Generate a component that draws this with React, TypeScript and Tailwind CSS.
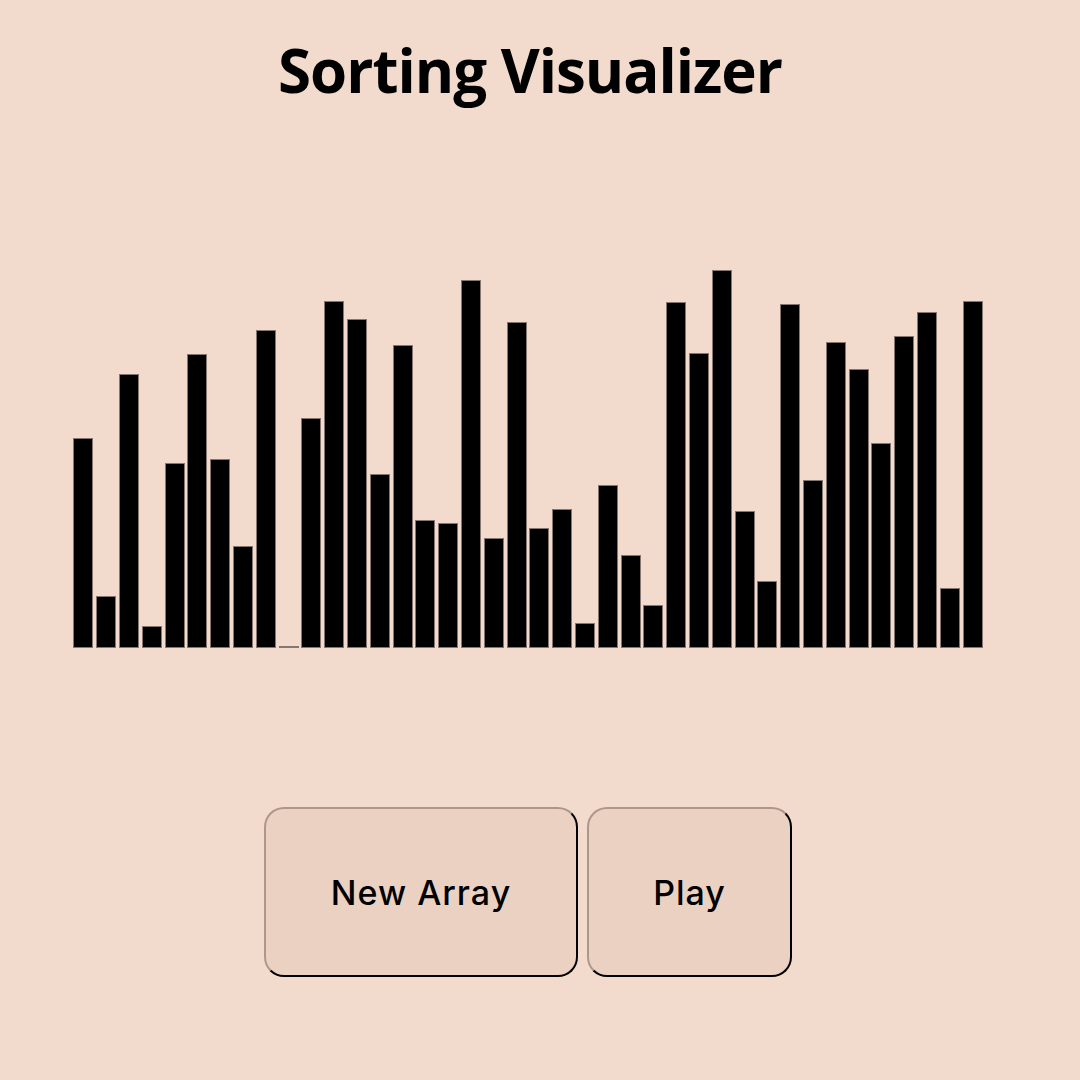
import React from "react";

const HEIGHTS = [
  210, 52, 274, 22, 185, 294, 189, 102, 318, 2,
  230, 347, 329, 174, 303, 128, 125, 368, 110, 326,
  120, 139, 25, 163, 93, 43, 346, 295, 378, 137,
  67, 344, 168, 306, 279, 205, 312, 336, 60, 347,
];

export default function App() {
  return (
    <div className="min-h-[1080px] w-full bg-[#f2dbcd] pr-[24px]">
      <div className="flex w-full flex-col items-center">
        <h1
          className="mt-[40px] pl-[4px] text-[60px] font-bold leading-[60px] tracking-[-1px] text-black"
          style={{ fontFamily: '"Open Sans", "Noto Sans", sans-serif' }}
        >
          Sorting Visualizer
        </h1>

        <div className="mt-[148px] flex h-[400px] items-end gap-[2.81px]">
          {HEIGHTS.map((h, i) => (
            <div
              key={i}
              className="w-[20px] border border-[#85776f] bg-black"
              style={{ height: `${h}px` }}
            />
          ))}
        </div>

        <div
          className="mt-[159px] flex gap-[9px]"
          style={{ fontFamily: 'Inter, "Liberation Sans", sans-serif' }}
        >
          <button className="flex h-[170px] w-[314px] items-center justify-center rounded-[20px] border-2 border-t-[#ad978a] border-l-[#ad978a] border-r-black border-b-black bg-[#ebd1c1] text-[34px] font-medium tracking-[1px] text-black">
            New Array
          </button>
          <button className="flex h-[170px] w-[205px] items-center justify-center rounded-[20px] border-2 border-t-[#ad978a] border-l-[#ad978a] border-r-black border-b-black bg-[#ebd1c1] text-[34px] font-medium tracking-[1px] text-black">
            Play
          </button>
        </div>
      </div>
    </div>
  );
}
